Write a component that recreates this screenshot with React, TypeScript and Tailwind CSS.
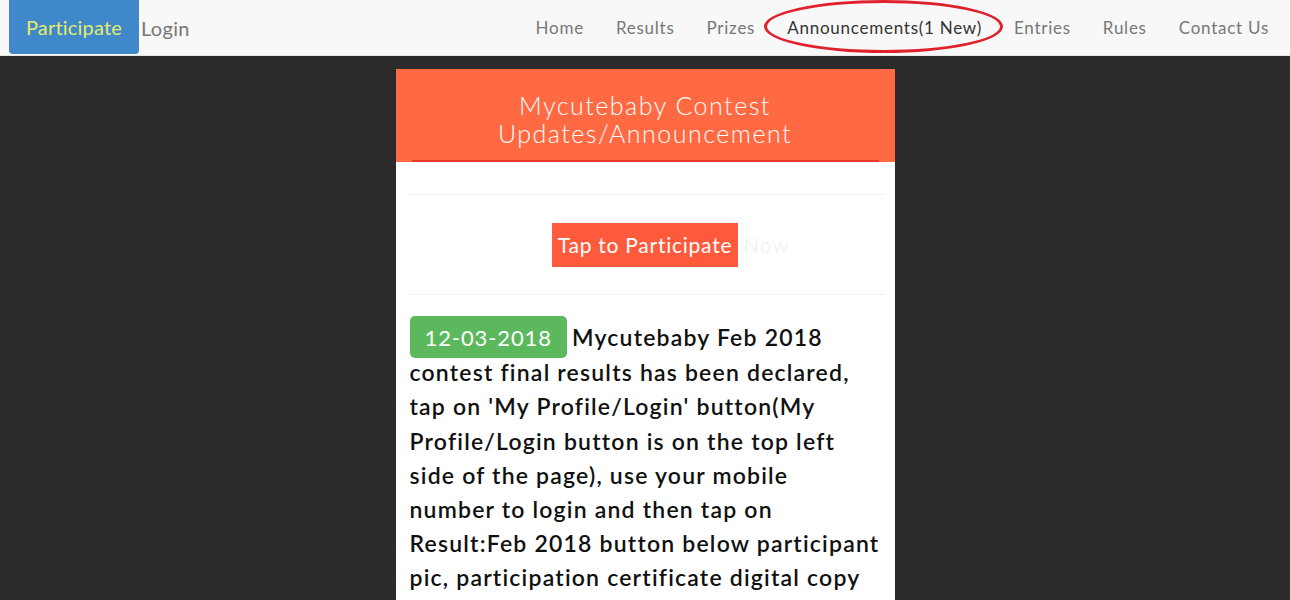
import React from "react"

const links = ["Home", "Results", "Prizes", "Announcements(1 New)", "Entries", "Rules", "Contact Us"]

const lines = [
  "contest final results has been declared,",
  "tap on 'My Profile/Login' button(My",
  "Profile/Login button is on the top left",
  "side of the page), use your mobile",
  "number to login and then tap on",
  "Result:Feb 2018 button below participant",
  "pic, participation certificate digital copy",
  "will be available there.",
]

export default function App() {
  return (
    <div className="h-[600px] overflow-hidden bg-[#2b2b2b]" style={{ fontFamily: "Lato, 'Open Sans', sans-serif" }}>
      <nav className="h-[56px] bg-[#f8f8f8] border-b border-[#e7e7e7] flex items-stretch">
        <div className="flex items-stretch pl-[9px]">
          <a className="w-[130px] h-[54px] bg-[#3f88c9] rounded-b-[4px] flex items-center justify-center text-[20px] tracking-[0.2px] text-[#e4ec6c]">
            Participate
          </a>
          <a className="ml-[2px] flex items-center text-[20px] tracking-[0.3px] text-[#777]">Login</a>
        </div>
        <ul className="ml-auto flex items-center pr-[5px]">
          {links.map((l) => (
            <li key={l} className="relative px-[16px] text-[17px] tracking-[0.75px] text-[#777]">
              {l.startsWith("Announcements") ? (
                <span className="relative text-[#333]">
                  {l}
                  <span className="absolute left-[-23px] right-[-21px] top-[-17px] bottom-[-15px] rounded-[50%] border-[3px] border-[#e0202a]"></span>
                </span>
              ) : (
                l
              )}
            </li>
          ))}
        </ul>
      </nav>

      <div className="flex justify-center pt-[13px]">
        <div className="w-[499px] bg-white">
          <div className="bg-[#ff6a43] px-[16px]">
            <h2 className="pt-[22px] pb-[13px] text-center text-white text-[25px] leading-[28px] tracking-[1.5px] font-light">
              Mycutebaby Contest
              <br />
              Updates/Announcement
            </h2>
            <div className="h-[2px] bg-[#e93a2d]"></div>
          </div>
          <div className="px-[11px]">
            <div className="h-[32px]"></div>
            <hr className="border-[#eeeeee]" />
            <div className="flex justify-center pt-[28px] pb-[27px]">
              <span className="relative bg-[#ff5a3c] text-white text-[21px] tracking-[0.75px] px-[6px] h-[44px] flex items-center">
                Tap to Participate
                <span className="absolute left-[100%] ml-[5px] text-[#f4f4f4]">Now</span>
              </span>
            </div>
            <hr className="border-[#eeeeee]" />
            <p className="pt-[25px] pl-[3px] text-[23px] leading-[34.2px] tracking-[1.2px] text-[#111] font-semibold whitespace-nowrap">
              <span className="bg-[#5cb85c] text-white font-normal rounded-[5px] px-[15px] pt-[8px] pb-[7px] text-[22px] tracking-[0.9px] mr-[5px]">
                12-03-2018
              </span>
              Mycutebaby Feb 2018
              {lines.map((t) => (
                <React.Fragment key={t}>
                  <br />
                  {t}
                </React.Fragment>
              ))}
            </p>
          </div>
        </div>
      </div>
    </div>
  )
}
